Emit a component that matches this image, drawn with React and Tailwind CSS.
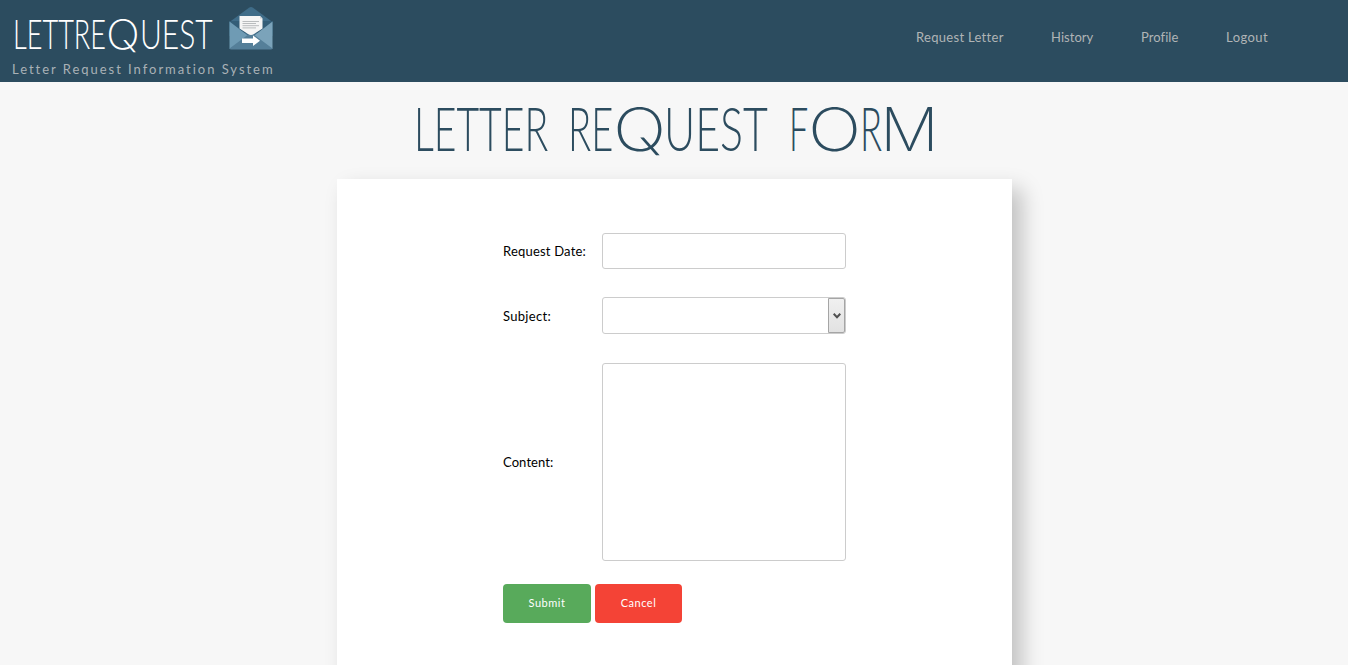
import { useLayoutEffect, useRef, useState } from "react";

// A run of letters condensed or widened to fill its box.
function Fit({ className, children }) {
  const box = useRef(null);
  const text = useRef(null);
  const [scale, setScale] = useState(1);
  useLayoutEffect(() => {
    const measure = () => setScale(box.current.offsetWidth / text.current.offsetWidth);
    measure();
    document.fonts?.ready.then(measure);
  }, []);
  return (
    <span ref={box} className={`inline-block shrink-0 ${className}`}>
      <span ref={text} className="inline-block origin-left" style={{ transform: `scaleX(${scale})` }}>
        {children}
      </span>
    </span>
  );
}

function Envelope() {
  return (
    <svg viewBox="0 0 44 44" className="mt-[6px] ml-[16px] h-[44px] w-[44px]">
      <path d="M.5 16 20 1.700Q22 .5 24 1.700L43.500 16V30H.5Z" fill="#3f6c88" />
      <path d="M.5 15H43.500V27H.5Z" fill="#335d77" />
      <path d="M.5 15.500 22 32 .5 43Z" fill="#6f9bb4" />
      <path d="M43.500 15.500 22 32 43.500 43Z" fill="#7ba3ba" />
      <path d="M.5 42.500 18 29.500Q22 26.500 26 29.500L43.500 42.500Q43 43.500 42 43.500H2Q1 43.500 .5 42.500Z" fill="#557f99" />
      <path d="M10.500 10H31L33.500 12.500V22.500L25 28Q22 30 19 28L10.500 22.500Z" fill="#f5f5f5" />
      <path d="M31 10V12.500H33.500Z" fill="#cfd4d7" />
      <path d="M13.500 15.500H30M13.500 17.500H27M13.500 19.700H30M13.500 21.900H27" stroke="#b9bcbe" strokeWidth="1" />
      <path d="M13 32.500H24V29.500L31 34.700 24 40V37H13Z" fill="#fff" />
    </svg>
  );
}

const links = [
  { label: "Request Letter", className: "w-[135px] tracking-[0.3px]" },
  { label: "History", className: "w-[90px] tracking-[0.050px]" },
  { label: "Profile", className: "w-[85px] tracking-[0.050px]" },
  { label: "Logout", className: "w-[42px] tracking-[0.45px]" },
];

export default function App() {
  return (
    <div className="flex h-[665px] flex-col overflow-hidden bg-[#f7f7f7] font-['Lato',sans-serif] text-[13px] text-black">
      <header className="flex h-[82px] shrink-0 justify-between bg-[#2c4c5f] pr-[80px]">
        <div>
          <div className="flex h-[58px] pl-[13px] text-white">
            <div className="flex items-baseline pt-[12px] text-[42px] leading-[42px] font-light whitespace-nowrap">
              <Fit className="w-[93px]">LETTRE</Fit>
              <Fit className="w-[34px] font-['Inter',sans-serif] text-[41px] font-[150]">Q</Fit>
              <Fit className="w-[73px]">UEST</Fit>
            </div>
            <Envelope />
          </div>
          <p className="pt-[2px] pl-[12px] text-[13px] leading-[18px] tracking-[1.970px] whitespace-nowrap text-[#a9b1b6]">
            Letter Request Information System
          </p>
        </div>
        <nav className="flex pt-[28px] leading-[18px] text-[#b0b4b6]">
          {links.map((l) => (
            <a key={l.label} href="#" className={`whitespace-nowrap ${l.className}`}>{l.label}</a>
          ))}
        </nav>
      </header>
      <h1 className="flex h-[97px] shrink-0 items-baseline pt-[15px] pl-[414px] text-[61px] leading-[61px] font-light whitespace-nowrap text-[#2c4c5f]">
        <Fit className="w-[134px]">LETTER</Fit>{" "}
        <Fit className="ml-[20px] w-[45px]">RE</Fit>
        <Fit className="-mr-[2px] w-[53px] font-['Inter',sans-serif] text-[60px] font-[170]">Q</Fit>
        <Fit className="w-[104px]">UEST</Fit>{" "}
        <Fit className="ml-[21px] w-[19px]">F</Fit>
        <Fit className="-mr-[1px] w-[53px] font-['Inter',sans-serif] text-[60px] font-[170]">O</Fit>
        <Fit className="w-[22px]">R</Fit>
        <Fit className="-ml-[2px] w-[59px] font-['Inter',sans-serif] text-[60px] font-[170]">M</Fit>
      </h1>
      <main className="ml-[337px] h-[520px] w-[675px] shrink-0 bg-white pt-[54px] pl-[166px] shadow-[10px_10px_20px_rgba(0,0,0,0.22)]">
        <form className="w-[343px]">
          <div className="flex h-[36px] items-center justify-between">
            <label className="pt-[2px] tracking-[0.2px]">Request Date:</label>
            <input className="h-[36px] w-[244px] rounded-[3px] border border-[#ccc] bg-white" />
          </div>
          <div className="mt-[28px] flex h-[37px] items-center justify-between">
            <label className="pt-[2px] tracking-[0.3px]">Subject:</label>
            <div className="flex h-[37px] w-[244px] justify-end rounded-[3px] border border-[#ccc] bg-white">
              <div className="flex w-[17px] items-center justify-center rounded-r-[2px] border border-[#a5a5a5] bg-linear-to-b from-[#f0f0f0] to-[#e2e2e2]">
                <svg viewBox="0 0 8 6" className="h-[6px] w-[8px]">
                  <path d="M.7 .8 4 4.300 7.300 .8" fill="none" stroke="#505050" strokeWidth="2" />
                </svg>
              </div>
            </div>
          </div>
          <div className="mt-[29px] flex h-[198px] items-center justify-between">
            <label className="pt-[2px] tracking-[0.1px]">Content:</label>
            <textarea className="h-[198px] w-[244px] resize-none rounded-[3px] border border-[#ccc] bg-white" />
          </div>
          <div className="mt-[23px] flex gap-[4px] text-[11px] tracking-[0.5px] text-white">
            <button type="button" className="h-[39px] w-[88px] rounded-[4px] bg-[#58aa5b]">Submit</button>
            <button type="button" className="h-[39px] w-[87px] rounded-[4px] bg-[#f44336]">Cancel</button>
          </div>
        </form>
      </main>
    </div>
  );
}
